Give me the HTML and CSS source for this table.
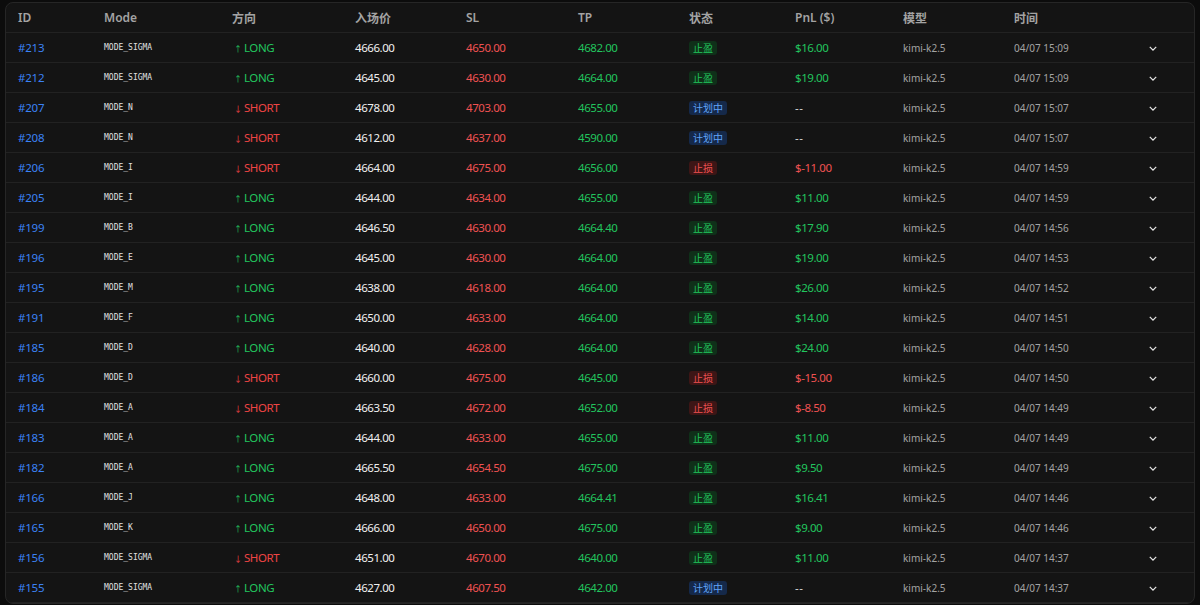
FILE: index.html
```html
<!DOCTYPE html>
<html lang="zh">
<head>
<meta charset="utf-8">
<title>Trades</title>
<link rel="stylesheet" href="styles.css">
</head>
<body>
<div class="panel">
<table class="trades">
<colgroup>
<col class="c-id"><col class="c-mode"><col class="c-dir"><col class="c-entry"><col class="c-sl"><col class="c-tp"><col class="c-status"><col class="c-pnl"><col class="c-model"><col class="c-time"><col class="c-act">
</colgroup>
<thead>
<tr><th>ID</th><th>Mode</th><th>方向</th><th>入场价</th><th>SL</th><th>TP</th><th>状态</th><th>PnL ($)</th><th>模型</th><th>时间</th><th></th></tr>
</thead>
<tbody>
<tr><td class="id">#213</td><td class="mode">MODE_SIGMA</td><td class="dir long"><span class="arr">↑</span>LONG</td><td class="entry">4666.00</td><td class="sl">4650.00</td><td class="tp">4682.00</td><td><span class="badge win">止盈</span></td><td class="pnl pos">$16.00</td><td class="model">kimi-k2.5</td><td class="time">04/07 15:09</td><td class="act"><svg viewBox="0 0 10 6"><path d="M1 1l4 4 4-4"/></svg></td></tr>
<tr><td class="id">#212</td><td class="mode">MODE_SIGMA</td><td class="dir long"><span class="arr">↑</span>LONG</td><td class="entry">4645.00</td><td class="sl">4630.00</td><td class="tp">4664.00</td><td><span class="badge win">止盈</span></td><td class="pnl pos">$19.00</td><td class="model">kimi-k2.5</td><td class="time">04/07 15:09</td><td class="act"><svg viewBox="0 0 10 6"><path d="M1 1l4 4 4-4"/></svg></td></tr>
<tr><td class="id">#207</td><td class="mode">MODE_N</td><td class="dir short"><span class="arr">↓</span>SHORT</td><td class="entry">4678.00</td><td class="sl">4703.00</td><td class="tp">4655.00</td><td><span class="badge plan">计划中</span></td><td class="pnl none">--</td><td class="model">kimi-k2.5</td><td class="time">04/07 15:07</td><td class="act"><svg viewBox="0 0 10 6"><path d="M1 1l4 4 4-4"/></svg></td></tr>
<tr><td class="id">#208</td><td class="mode">MODE_N</td><td class="dir short"><span class="arr">↓</span>SHORT</td><td class="entry">4612.00</td><td class="sl">4637.00</td><td class="tp">4590.00</td><td><span class="badge plan">计划中</span></td><td class="pnl none">--</td><td class="model">kimi-k2.5</td><td class="time">04/07 15:07</td><td class="act"><svg viewBox="0 0 10 6"><path d="M1 1l4 4 4-4"/></svg></td></tr>
<tr><td class="id">#206</td><td class="mode">MODE_I</td><td class="dir short"><span class="arr">↓</span>SHORT</td><td class="entry">4664.00</td><td class="sl">4675.00</td><td class="tp">4656.00</td><td><span class="badge loss">止损</span></td><td class="pnl neg">$-11.00</td><td class="model">kimi-k2.5</td><td class="time">04/07 14:59</td><td class="act"><svg viewBox="0 0 10 6"><path d="M1 1l4 4 4-4"/></svg></td></tr>
<tr><td class="id">#205</td><td class="mode">MODE_I</td><td class="dir long"><span class="arr">↑</span>LONG</td><td class="entry">4644.00</td><td class="sl">4634.00</td><td class="tp">4655.00</td><td><span class="badge win">止盈</span></td><td class="pnl pos">$11.00</td><td class="model">kimi-k2.5</td><td class="time">04/07 14:59</td><td class="act"><svg viewBox="0 0 10 6"><path d="M1 1l4 4 4-4"/></svg></td></tr>
<tr><td class="id">#199</td><td class="mode">MODE_B</td><td class="dir long"><span class="arr">↑</span>LONG</td><td class="entry">4646.50</td><td class="sl">4630.00</td><td class="tp">4664.40</td><td><span class="badge win">止盈</span></td><td class="pnl pos">$17.90</td><td class="model">kimi-k2.5</td><td class="time">04/07 14:56</td><td class="act"><svg viewBox="0 0 10 6"><path d="M1 1l4 4 4-4"/></svg></td></tr>
<tr><td class="id">#196</td><td class="mode">MODE_E</td><td class="dir long"><span class="arr">↑</span>LONG</td><td class="entry">4645.00</td><td class="sl">4630.00</td><td class="tp">4664.00</td><td><span class="badge win">止盈</span></td><td class="pnl pos">$19.00</td><td class="model">kimi-k2.5</td><td class="time">04/07 14:53</td><td class="act"><svg viewBox="0 0 10 6"><path d="M1 1l4 4 4-4"/></svg></td></tr>
<tr><td class="id">#195</td><td class="mode">MODE_M</td><td class="dir long"><span class="arr">↑</span>LONG</td><td class="entry">4638.00</td><td class="sl">4618.00</td><td class="tp">4664.00</td><td><span class="badge win">止盈</span></td><td class="pnl pos">$26.00</td><td class="model">kimi-k2.5</td><td class="time">04/07 14:52</td><td class="act"><svg viewBox="0 0 10 6"><path d="M1 1l4 4 4-4"/></svg></td></tr>
<tr><td class="id">#191</td><td class="mode">MODE_F</td><td class="dir long"><span class="arr">↑</span>LONG</td><td class="entry">4650.00</td><td class="sl">4633.00</td><td class="tp">4664.00</td><td><span class="badge win">止盈</span></td><td class="pnl pos">$14.00</td><td class="model">kimi-k2.5</td><td class="time">04/07 14:51</td><td class="act"><svg viewBox="0 0 10 6"><path d="M1 1l4 4 4-4"/></svg></td></tr>
<tr><td class="id">#185</td><td class="mode">MODE_D</td><td class="dir long"><span class="arr">↑</span>LONG</td><td class="entry">4640.00</td><td class="sl">4628.00</td><td class="tp">4664.00</td><td><span class="badge win">止盈</span></td><td class="pnl pos">$24.00</td><td class="model">kimi-k2.5</td><td class="time">04/07 14:50</td><td class="act"><svg viewBox="0 0 10 6"><path d="M1 1l4 4 4-4"/></svg></td></tr>
<tr><td class="id">#186</td><td class="mode">MODE_D</td><td class="dir short"><span class="arr">↓</span>SHORT</td><td class="entry">4660.00</td><td class="sl">4675.00</td><td class="tp">4645.00</td><td><span class="badge loss">止损</span></td><td class="pnl neg">$-15.00</td><td class="model">kimi-k2.5</td><td class="time">04/07 14:50</td><td class="act"><svg viewBox="0 0 10 6"><path d="M1 1l4 4 4-4"/></svg></td></tr>
<tr><td class="id">#184</td><td class="mode">MODE_A</td><td class="dir short"><span class="arr">↓</span>SHORT</td><td class="entry">4663.50</td><td class="sl">4672.00</td><td class="tp">4652.00</td><td><span class="badge loss">止损</span></td><td class="pnl neg">$-8.50</td><td class="model">kimi-k2.5</td><td class="time">04/07 14:49</td><td class="act"><svg viewBox="0 0 10 6"><path d="M1 1l4 4 4-4"/></svg></td></tr>
<tr><td class="id">#183</td><td class="mode">MODE_A</td><td class="dir long"><span class="arr">↑</span>LONG</td><td class="entry">4644.00</td><td class="sl">4633.00</td><td class="tp">4655.00</td><td><span class="badge win">止盈</span></td><td class="pnl pos">$11.00</td><td class="model">kimi-k2.5</td><td class="time">04/07 14:49</td><td class="act"><svg viewBox="0 0 10 6"><path d="M1 1l4 4 4-4"/></svg></td></tr>
<tr><td class="id">#182</td><td class="mode">MODE_A</td><td class="dir long"><span class="arr">↑</span>LONG</td><td class="entry">4665.50</td><td class="sl">4654.50</td><td class="tp">4675.00</td><td><span class="badge win">止盈</span></td><td class="pnl pos">$9.50</td><td class="model">kimi-k2.5</td><td class="time">04/07 14:49</td><td class="act"><svg viewBox="0 0 10 6"><path d="M1 1l4 4 4-4"/></svg></td></tr>
<tr><td class="id">#166</td><td class="mode">MODE_J</td><td class="dir long"><span class="arr">↑</span>LONG</td><td class="entry">4648.00</td><td class="sl">4633.00</td><td class="tp">4664.41</td><td><span class="badge win">止盈</span></td><td class="pnl pos">$16.41</td><td class="model">kimi-k2.5</td><td class="time">04/07 14:46</td><td class="act"><svg viewBox="0 0 10 6"><path d="M1 1l4 4 4-4"/></svg></td></tr>
<tr><td class="id">#165</td><td class="mode">MODE_K</td><td class="dir long"><span class="arr">↑</span>LONG</td><td class="entry">4666.00</td><td class="sl">4650.00</td><td class="tp">4675.00</td><td><span class="badge win">止盈</span></td><td class="pnl pos">$9.00</td><td class="model">kimi-k2.5</td><td class="time">04/07 14:46</td><td class="act"><svg viewBox="0 0 10 6"><path d="M1 1l4 4 4-4"/></svg></td></tr>
<tr><td class="id">#156</td><td class="mode">MODE_SIGMA</td><td class="dir short"><span class="arr">↓</span>SHORT</td><td class="entry">4651.00</td><td class="sl">4670.00</td><td class="tp">4640.00</td><td><span class="badge win">止盈</span></td><td class="pnl pos">$11.00</td><td class="model">kimi-k2.5</td><td class="time">04/07 14:37</td><td class="act"><svg viewBox="0 0 10 6"><path d="M1 1l4 4 4-4"/></svg></td></tr>
<tr><td class="id">#155</td><td class="mode">MODE_SIGMA</td><td class="dir long"><span class="arr">↑</span>LONG</td><td class="entry">4627.00</td><td class="sl">4607.50</td><td class="tp">4642.00</td><td><span class="badge plan">计划中</span></td><td class="pnl none">--</td><td class="model">kimi-k2.5</td><td class="time">04/07 14:37</td><td class="act"><svg viewBox="0 0 10 6"><path d="M1 1l4 4 4-4"/></svg></td></tr>
</tbody>
</table>
</div>
</body>
</html>
```

FILE: styles.css
```css
html, body {
  margin: 0;
  background: #0c0c0c;
}
body {
  padding: 2px 5px 0 5px;
  font-family: "Noto Sans", "Noto Sans CJK SC", sans-serif;
  color: #e5e5e5;
}
.panel {
  background: #141414;
  border: 1px solid #262626;
  border-radius: 8px;
  overflow: hidden;
}
.trades {
  width: 100%;
  border-collapse: collapse;
  table-layout: fixed;
}
.c-id { width: 86px; }
.c-mode { width: 128px; }
.c-dir { width: 123px; }
.c-entry { width: 111px; }
.c-sl { width: 112px; }
.c-tp { width: 111px; }
.c-status { width: 106px; }
.c-pnl { width: 108px; }
.c-model { width: 111px; }
.c-time { width: 110px; }
.c-act { width: 82px; }

th {
  height: 29px;
  padding: 0 0 0 12px;
  text-align: left;
  font-size: 12px;
  font-weight: 600;
  color: #a3a3a3;
  border-bottom: 1px solid #222;
  white-space: nowrap;
}
td {
  height: 29px;
  padding: 0 0 0 12px;
  font-size: 11.5px;
  border-bottom: 1px solid #222;
  white-space: nowrap;
  letter-spacing: -0.45px;
}
.id { color: #3b82f6; letter-spacing: -0.2px; }
.mode {
  font-family: "DejaVu Sans Mono", monospace;
  font-size: 8px;
  color: #e0e0e0;
  letter-spacing: 0;
}
.dir .arr {
  display: inline-block;
  font-size: 8px;
  width: 10px;
  margin-left: 2px;
}
.long { color: #22c55e; }
.short { color: #ef4444; }
.entry { color: #f0f0f0; font-weight: 400; }
.sl { color: #f05252; }
.tp { color: #22c55e; }
.badge {
  display: inline-block;
  font-family: "Noto Sans CJK SC", sans-serif;
  font-size: 10px;
  line-height: 14px;
  padding: 0 4px;
  border-radius: 3px;
  letter-spacing: 0;
}
.win { background: #0f3019; color: #22c55e; }
.plan { background: #15294a; color: #60a5fa; }
.loss { background: #3d1616; color: #f05252; }
.pos { color: #22c55e; }
.neg { color: #f05252; }
.none { color: #d4d4d4; letter-spacing: 0.5px; }
.model, .time {
  font-size: 10px;
  color: #a3a3a3;
  letter-spacing: 0;
}
.act {
  padding: 0;
  text-align: center;
}
.act svg {
  width: 8px;
  height: 5px;
  fill: none;
  stroke: #e5e5e5;
  stroke-width: 1.6;
  vertical-align: middle;
}
```
